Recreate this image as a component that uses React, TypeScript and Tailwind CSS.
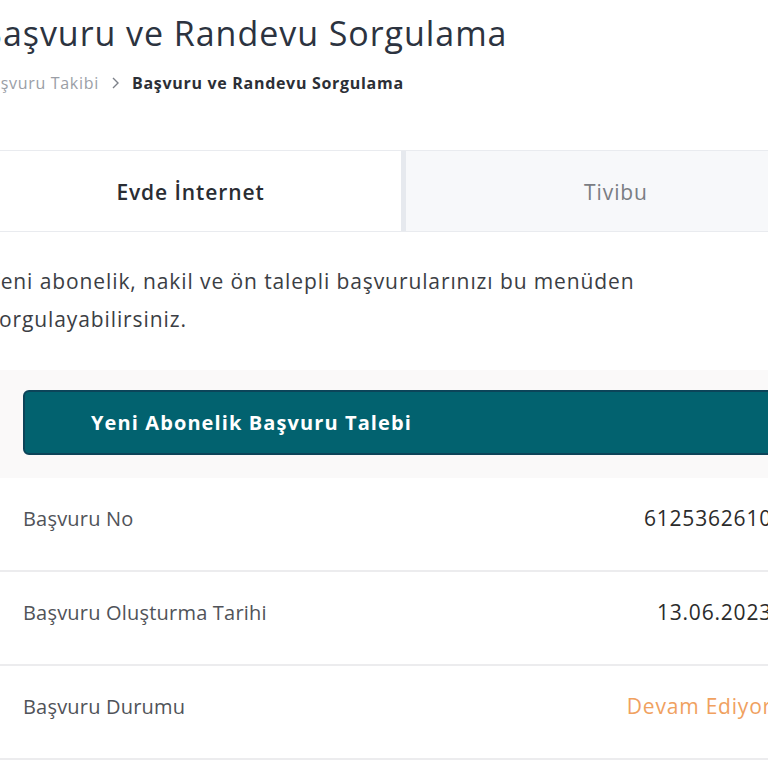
export default function App() {
  const rows = [
    { label: 'Başvuru No', value: '6125362610', tone: 'text-[#2b2b2b]' },
    { label: 'Başvuru Oluşturma Tarihi', value: '13.06.2023', tone: 'text-[#2b2b2b]' },
    { label: 'Başvuru Durumu', value: 'Devam Ediyor', tone: 'text-[#f0a15f]' },
  ];

  return (
    <div className="w-[768px] h-[768px] overflow-hidden bg-white font-['Open_Sans',sans-serif]">
      <div className="-ml-[20px] w-[846px]">
        <h1 className="pt-[12px] text-[34px] leading-[42px] tracking-[0.95px] text-[#2c3340]">Başvuru ve Randevu Sorgulama</h1>
        <div className="mt-[18px] flex items-center text-[16px] leading-[22px] tracking-[0.7px]">
          <span className="text-[#9a9ea6]">Başvuru Takibi</span>
          <svg className="mx-[12px]" width="9" height="14" viewBox="0 0 9 14" fill="none">
            <path d="M2 2l5 5-5 5" stroke="#7c8089" strokeWidth="1.4" />
          </svg>
          <span className="font-bold text-[#2c2f36]">Başvuru ve Randevu Sorgulama</span>
        </div>

        <div className="mt-[56px] flex h-[82px] border-y border-[#e9ebef] pt-[4px] text-[21px] tracking-[0.9px]">
          <div className="flex w-[421px] items-center justify-center bg-white font-semibold text-[#2a2d33]">Evde İnternet</div>
          <div className="-mt-[4px] w-[5px] bg-[#e6e9ee]" />
          <div className="-mt-[4px] flex flex-1 items-center justify-center bg-[#f7f8fa] pt-[4px] text-[#7a7d83]">Tivibu</div>
        </div>

        <p className="mt-[30px] pl-[8px] text-[21px] leading-[38px] tracking-[0.9px] text-[#3b3e44]">
          Yeni abonelik, nakil ve ön talepli başvurularınızı bu menüden
          <br />
          sorgulayabilirsiniz.
        </p>

        <div className="mt-[32px] bg-[#faf9f9] px-[43px] pt-[20px] pb-[23px]">
          <div className="flex h-[65px] items-center rounded-[6px] border-2 border-[#0c4459] bg-[#02626f] pl-[66px] text-[20px] font-bold tracking-[1.1px] text-white">
            Yeni Abonelik Başvuru Talebi
          </div>
        </div>

        <div className="bg-white">
          {rows.map((r) => (
            <div key={r.label} className="flex h-[94px] items-center justify-between border-b-2 border-[#ececee] pl-[43px] pr-[54px] pb-[10px]">
              <span className="text-[20px] tracking-[0.2px] text-[#505359]">{r.label}</span>
              <span className={`text-[21px] tracking-[0.8px] ${r.tone}`}>{r.value}</span>
            </div>
          ))}
        </div>
      </div>
    </div>
  );
}
